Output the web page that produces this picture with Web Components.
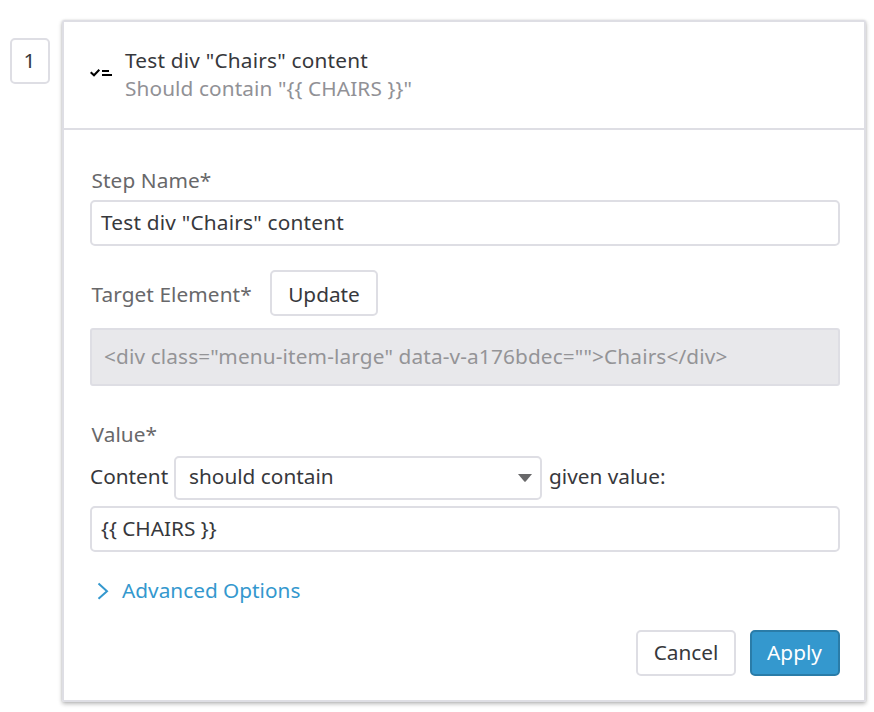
<!DOCTYPE html>
<html lang="en">
<head>
<meta charset="utf-8">
<title>Test step</title>
<style>
body { margin: 0; background: #fff; font: 20.8px/28px "Noto Sans", sans-serif; color: #37383c; width: 874px; height: 712px; overflow: hidden; }
</style>
</head>
<body>
<step-editor></step-editor>
<script>
const define = (name, html) => customElements.define(name, class extends HTMLElement {
  constructor() {
    super();
    this.attachShadow({ mode: "open" }).innerHTML = html;
  }
});

define("step-number", `
<style>
:host { box-sizing: border-box; width: 40px; height: 46px; border: 2px solid #dedee4; border-radius: 5px; display: flex; justify-content: center; padding: 6px 1px 0 0; }
</style><slot></slot>`);

define("check-icon", `
<style>:host { display: block; width: 22px; height: 10px; } svg { display: block; }</style>
<svg width="22" height="10" viewBox="0 0 22 10" fill="none" stroke="#000" stroke-width="2">
<path d="M.7 4.2 4 7.3 9.3 1.7"/><path d="M12 2.9h7M12 7h10"/></svg>`);

define("step-header", `
<style>
:host { display: flex; box-sizing: border-box; height: 108px; border-bottom: 2px solid #dedee4; padding: 24px 26px 0; }
check-icon { margin: 22px 13px 0 0; }
.title { letter-spacing: .21px; }
.sub { color: #919196; letter-spacing: .1px; }
</style>
<check-icon></check-icon><div><div class="title"><slot></slot></div><div class="sub"><slot name="sub"></slot></div></div>`);

define("field-label", `<style>:host { display: block; color: #68686a; padding-left: 1.5px; letter-spacing: .08px; }</style><slot></slot>`);

define("text-field", `
<style>
:host { display: block; box-sizing: border-box; height: 46px; border: 2px solid #dedee4; border-radius: 5px; padding: 6px 9px; }
</style><slot></slot>`);

define("code-preview", `
<style>
:host { display: block; box-sizing: border-box; height: 58px; border: 2px solid #dedee4; border-radius: 3px; background: #e8e8eb; color: #949497; padding: 12px; letter-spacing: .134px; }
</style><slot></slot>`);

define("select-box", `
<style>
:host { display: flex; box-sizing: border-box; width: 368px; height: 44px; border: 2px solid #dedee4; border-radius: 5px; padding: 4px 8px 0 13px; justify-content: space-between; }
svg { display: block; margin-top: 12px; }
</style><span><slot></slot></span>
<svg width="14" height="8" viewBox="0 0 14 8"><path d="M0 0h14L7.7 7.5Q7 8.2 6.3 7.5z" fill="#68686a"/></svg>`);

define("push-button", `
<style>
:host { display: flex; justify-content: center; box-sizing: border-box; width: var(--w); height: 46px; border: 2px solid #dedee4; border-radius: 5px; padding-top: var(--top, 6px); }
:host([primary]) { background: #3498ce; border-color: #2a7ca8; color: #fff; padding-right: 1px; }
</style><slot></slot>`);

define("disclosure-link", `
<style>
:host { display: flex; color: #3498ce; padding-left: 7px; }
svg { display: block; margin: 6px 13px 0 0; }
</style>
<svg width="12" height="18" viewBox="0 0 12 18" fill="none" stroke="#3498ce" stroke-width="2"><path d="M1.5 1.5 10 9.2 1.5 16.8"/></svg><span><slot></slot></span>`);

define("step-card", `
<style>
:host { display: block; box-sizing: border-box; width: 804px; height: 682px; border: 2px solid #dedee4; border-radius: 2px; box-shadow: 0 2px 4px rgba(0,0,0,.27), 0 0 2px rgba(0,0,0,.12); }
</style><slot></slot>`);

define("step-editor", `
<style>
:host { display: flex; align-items: flex-start; padding: 20px 8px 0 10px; white-space: nowrap; }
step-number { margin: 18px 12px 0 0; }
form { display: flex; flex-direction: column; padding: 36px 24px 0 26px; margin: 0; }
.name { margin-top: 6px; letter-spacing: .21px; }
.target { display: flex; align-items: center; margin: 24px 0 12px; }
.target field-label { box-sizing: border-box; width: 180px; padding-top: 2px; }
.value { margin-top: 34px; }
.condition { display: flex; margin: 8px 0 6px; }
.condition > span { padding-top: 6px; }
.condition select-box { margin-right: 7px; }
.condition .lead { width: 84px; }
disclosure-link { margin-top: 24px; }
.actions { display: flex; justify-content: flex-end; gap: 14px; margin-top: 26px; }
</style>
<step-number>1</step-number>
<step-card>
  <step-header>Test div "Chairs" content<span slot="sub">Should contain "{{ CHAIRS }}"</span></step-header>
  <form>
    <field-label>Step Name*</field-label>
    <text-field class="name">Test div "Chairs" content</text-field>
    <div class="target"><field-label>Target Element*</field-label><push-button style="--w:108px;--top:8px">Update</push-button></div>
    <code-preview>&lt;div class="menu-item-large" data-v-a176bdec=""&gt;Chairs&lt;/div&gt;</code-preview>
    <field-label class="value">Value*</field-label>
    <div class="condition"><span class="lead">Content</span><select-box>should contain</select-box><span>given value:</span></div>
    <text-field>{{ CHAIRS }}</text-field>
    <disclosure-link>Advanced Options</disclosure-link>
    <div class="actions"><push-button style="--w:100px">Cancel</push-button><push-button primary style="--w:90px">Apply</push-button></div>
  </form>
</step-card>`);
</script>
</body>
</html>
